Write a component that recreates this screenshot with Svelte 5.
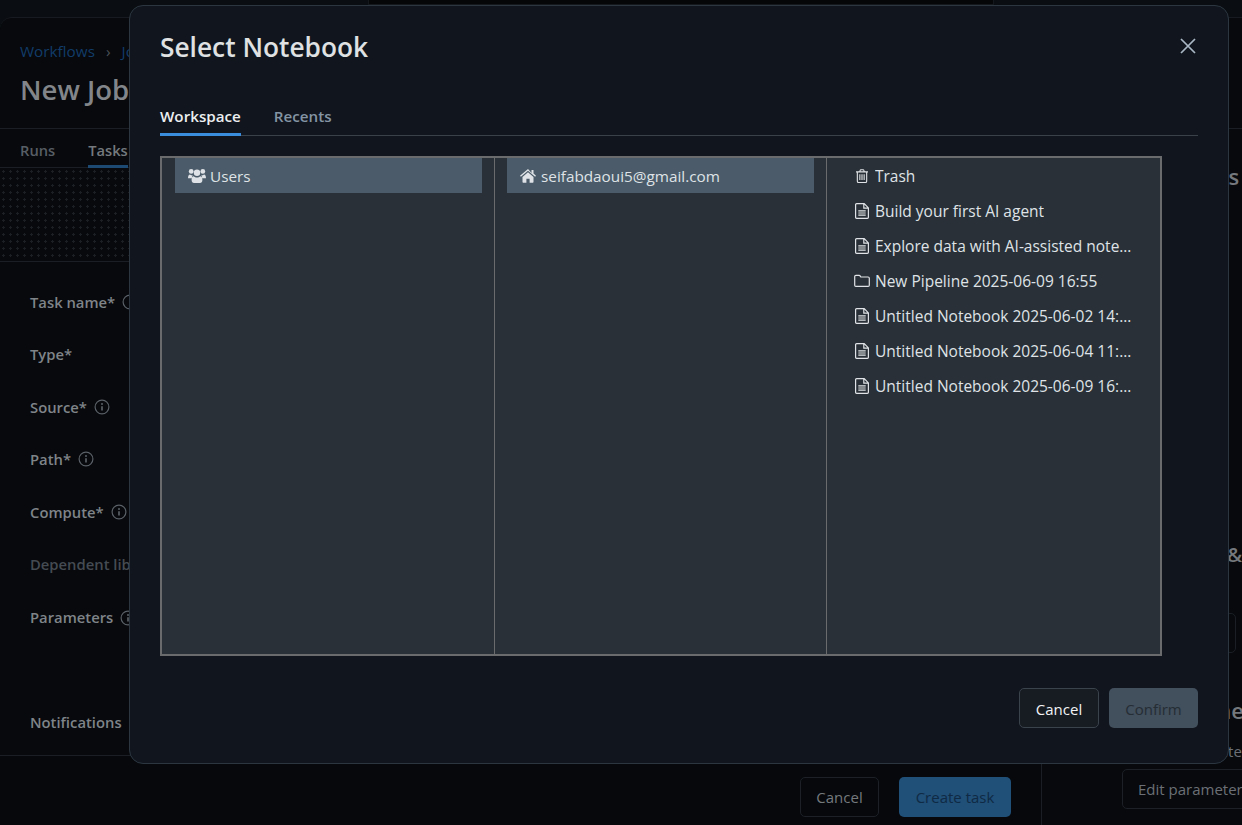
<script lang="ts">
	const fields = [
		{ label: 'Task name*', info: true },
		{ label: 'Type*', info: false },
		{ label: 'Source*', info: true },
		{ label: 'Path*', info: true },
		{ label: 'Compute*', info: true },
		{ label: 'Dependent libraries', info: false, muted: true },
		{ label: 'Parameters', info: true, tall: true },
		{ label: 'Notifications', info: false }
	];

	const files = [
		{ icon: 'trash', name: 'Trash' },
		{ icon: 'file', name: 'Build your first AI agent' },
		{ icon: 'file', name: 'Explore data with AI-assisted notebooks' },
		{ icon: 'folder', name: 'New Pipeline 2025-06-09 16:55' },
		{ icon: 'file', name: 'Untitled Notebook 2025-06-02 14:32:18' },
		{ icon: 'file', name: 'Untitled Notebook 2025-06-04 11:07:45' },
		{ icon: 'file', name: 'Untitled Notebook 2025-06-09 16:21:03' }
	];
</script>

{#snippet icon(name: string)}
	{#if name === 'users'}
		<svg class="ico users" viewBox="0 0 18 16" fill="currentColor">
			<circle cx="3.2" cy="3.4" r="2.4" />
			<circle cx="14.8" cy="3.4" r="2.4" />
			<circle cx="9" cy="4.8" r="3.2" />
			<path d="M0 10.2c0-2.4.8-3.8 2-3.8.8.7 1.7 1 2.7.9-.5.8-.8 1.7-.9 2.9H0zM18 10.2c0-2.4-.8-3.8-2-3.800-.8.700-1.700 1-2.700.900.500.800.800 1.700.900 2.900H18z" />
			<path d="M5.600 8.300c1 .900 2.100 1.300 3.400 1.300s2.400-.400 3.400-1.300c1.300 0 2 1.500 2 3.800 0 1.800-1 2.900-2.400 2.900H6c-1.400 0-2.400-1.100-2.400-2.900 0-2.300.700-3.800 2-3.800z" />
		</svg>
	{:else if name === 'home'}
		<svg class="ico home" viewBox="0 0 16 14" fill="currentColor">
			<path d="M8 3.300 2.500 7.900v5.200c0 .4.300.7.700.7h3.200V9.700h3.200v4.100h3.200c.4 0 .7-.3.700-.7V7.900L8 3.300z" />
			<path d="M8 0 0 6.700l.9 1L8 1.800l7.100 5.900.9-1-2.500-2.100V1h-2v2.900L8 0z" />
		</svg>
	{:else if name === 'trash'}
		<svg class="ico trash" viewBox="0 0 14 15" fill="none" stroke="currentColor" stroke-width="1.200">
			<path d="M.6 3.100h12.800M2 3.100v9.900c0 .8.500 1.400 1.200 1.400h7.600c.7 0 1.200-.6 1.200-1.400V3.100M4.400 3.100l.7-1.800c.1-.3.300-.5.600-.5h2.600c.3 0 .5.200.6.500l.7 1.800M4.700 5.600v6.300M7 5.600v6.300M9.300 5.600v6.300" />
		</svg>
	{:else if name === 'folder'}
		<svg class="ico folder" viewBox="0 0 16 14" fill="none" stroke="currentColor" stroke-width="1.200">
			<path d="M.7 2.500c0-.7.500-1.200 1.200-1.200h3.200c.6 0 .9.300 1.200.8l.5.9h7.300c.7 0 1.200.5 1.200 1.200v7c0 .7-.5 1.200-1.200 1.200H1.900c-.7 0-1.200-.5-1.200-1.200v-8.700z" />
		</svg>
	{:else}
		<svg class="ico" viewBox="0 0 14 16" fill="none" stroke="currentColor" stroke-width="1.200">
			<path d="M1.600.7h7.600l4.200 4.200v9.400c0 .6-.4 1-1 1H1.600c-.6 0-1-.4-1-1V1.700c0-.6.400-1 1-1zM8.800.9v4.300h4.500M3.300 7.800h7.400M3.300 10h7.400M3.300 12.200h7.400" />
		</svg>
	{/if}
{/snippet}

{#snippet info()}
	<svg class="info" viewBox="0 0 16 16" fill="none" stroke="currentColor" stroke-width="1.200">
		<circle cx="8" cy="8" r="6.900" />
		<path d="M8 7.200v4.400" stroke-width="1.700" />
		<circle cx="8" cy="4.900" r="1" fill="currentColor" stroke="none" />
	</svg>
{/snippet}

<div class="page">
	<div class="topbar"><div class="topbar__tab"></div></div>

	<div class="job">
		<header class="job__head">
			<nav class="crumbs"><span>Workflows</span><i>›</i><span>Jobs</span></nav>
			<h1>New Job</h1>
		</header>

		<div class="job__body">
			<section class="left">
				<div class="tabs"><span>Runs</span><span class="tabs__on">Tasks</span></div>
				<div class="canvas"></div>
				<div class="form">
					{#each fields as f}
						<div class="field" class:field--tall={f.tall} class:field--muted={f.muted}>
							<span>{f.label}</span>
							{#if f.info}{@render info()}{/if}
						</div>
					{/each}
				</div>
				<footer class="left__foot">
					<button class="ghost">Cancel</button>
					<button class="create">Create task</button>
				</footer>
			</section>

			<aside class="right">
				<h2 class="details">Job details</h2>
				<h2 class="sched">Schedules &amp; Triggers</h2>
				<div class="box"></div>
				<h2 class="params">Job parameters</h2>
				<p>Set job parameters</p>
				<button class="edit">Edit parameters</button>
			</aside>
		</div>
	</div>

	<div class="modal">
		<div class="modal__head">
			<h3>Select Notebook</h3>
			<svg class="close" viewBox="0 0 16 16" fill="none" stroke="currentColor" stroke-width="1.700">
				<path d="M1 1l14 14M15 1 1 15" />
			</svg>
		</div>

		<div class="mtabs">
			<span class="mtabs__on">Workspace</span>
			<span>Recents</span>
		</div>

		<div class="finder">
			<ul class="col">
				<li class="row row--on">{@render icon('users')}<span>Users</span></li>
			</ul>
			<ul class="col">
				<li class="row row--on">{@render icon('home')}<span>seifabdaoui5@gmail.com</span></li>
			</ul>
			<ul class="col col--files">
				{#each files as f}
					<li class="row">{@render icon(f.icon)}<span class="row__name">{f.name}</span></li>
				{/each}
			</ul>
		</div>

		<div class="modal__foot">
			<button class="cancel">Cancel</button>
			<button class="confirm">Confirm</button>
		</div>
	</div>
</div>

<style>
	:global(body) {
		margin: 0;
		background: #07090c;
		font-family: 'Open Sans', 'Noto Sans', sans-serif;
	}
	.page {
		position: relative;
		width: 1242px;
		height: 825px;
		overflow: hidden;
		display: flex;
		flex-direction: column;
		background: #0a0d11;
	}
	.topbar {
		height: 17px;
		flex: none;
		display: flex;
		justify-content: center;
	}
	.topbar__tab {
		width: 624px;
		height: 4px;
		margin-left: 120px;
		background: #050608;
		border: 1px solid #14181d;
		border-top: none;
	}
	.job {
		flex: 1;
		display: flex;
		flex-direction: column;
		min-height: 0;
		background: #07090c;
		border-top: 1px solid #171b21;
		border-top-left-radius: 12px;
	}
	.job__head {
		height: 111px;
		flex: none;
		padding: 23px 0 0 20px;
		box-sizing: border-box;
		border-bottom: 1px solid #1b1f25;
	}
	.crumbs {
		display: flex;
		align-items: center;
		gap: 11px;
		font-size: 15.300px;
		line-height: 20px;
		color: #123c69;
	}
	.crumbs i {
		font-style: normal;
		color: #4b5158;
	}
	h1 {
		margin: 11px 0 0;
		font-size: 27.500px;
		line-height: 36px;
		font-weight: 600;
		color: #82868a;
	}
	.job__body {
		flex: 1;
		display: flex;
		min-height: 0;
	}
	.left {
		width: 1041px;
		flex: none;
		display: flex;
		flex-direction: column;
		border-right: 1px solid #1b1f25;
	}
	.tabs {
		height: 39px;
		flex: none;
		display: flex;
		gap: 33px;
		padding-left: 20px;
		box-sizing: border-box;
		border-bottom: 1px solid #1b1f25;
		font-size: 14.700px;
		font-weight: 600;
		line-height: 42px;
		color: #585e65;
	}
	.tabs__on {
		color: #74797e;
		height: 39px;
		box-sizing: border-box;
		border-bottom: 3px solid #1c4a73;
	}
	.canvas {
		height: 93px;
		flex: none;
		border-bottom: 1px solid #1b1f25;
		background-color: #07090c;
		background-image: radial-gradient(#1c2025 1px, transparent 1.200px);
		background-size: 7px 7px;
	}
	.form {
		flex: 1;
		padding: 13.500px 0 0 30px;
	}
	.field {
		height: 52.500px;
		display: flex;
		align-items: center;
		gap: 7px;
		font-size: 14.800px;
		font-weight: 600;
		color: #7f8489;
		white-space: nowrap;
	}
	.field--tall {
		height: 105px;
		align-items: flex-start;
		padding-top: 16.500px;
		box-sizing: border-box;
	}
	.field--tall .info {
		margin-top: 3px;
	}
	.field--muted {
		color: #454b52;
	}
	.info {
		width: 16px;
		height: 16px;
		color: #5a6067;
	}
	.left__foot {
		height: 70px;
		flex: none;
		display: flex;
		justify-content: flex-end;
		gap: 20px;
		padding: 21px 30px 0 0;
		box-sizing: border-box;
		border-top: 1px solid #1b1f25;
		background: #06080b;
	}
	button {
		font: inherit;
		font-size: 15px;
		border-radius: 5px;
		box-sizing: border-box;
		padding: 0;
	}
	.ghost {
		width: 79px;
		height: 40px;
		background: transparent;
		border: 1px solid #1d2127;
		color: #75797e;
	}
	.create {
		width: 112px;
		height: 40px;
		border: none;
		background: #204f78;
		color: #0f2a44;
	}
	.right {
		flex: 1;
		min-width: 0;
		padding-left: 80px;
		overflow: hidden;
		white-space: nowrap;
		color: #6c7076;
	}
	.right h2 {
		margin: 0;
		font-size: 22px;
		line-height: 28px;
		font-weight: 600;
		color: #74787c;
	}
	.right .details {
		padding: 33px 0 0 7px;
	}
	.right .sched {
		padding-top: 350px;
		font-size: 20.500px;
	}
	.box {
		width: 114px;
		height: 40px;
		margin-top: 45px;
		box-sizing: border-box;
		border: 1px solid #1b1f25;
		border-radius: 5px;
	}
	.right .params {
		padding-top: 43px;
	}
	.right p {
		margin: 17px 0 0;
		font-size: 15px;
		line-height: 20px;
	}
	.edit {
		display: block;
		width: 140px;
		height: 40px;
		margin-top: 8px;
		text-align: left;
		padding-left: 15px;
		background: transparent;
		border: 1px solid #1d2127;
		color: #6c7076;
	}
	.modal {
		position: absolute;
		left: 129px;
		top: 5px;
		width: 1100px;
		height: 759px;
		box-sizing: border-box;
		padding: 0 30px;
		display: flex;
		flex-direction: column;
		background: #11161e;
		border: 1px solid #2c3641;
		border-radius: 14px;
	}
	.modal__head {
		height: 84px;
		flex: none;
		display: flex;
		justify-content: space-between;
		align-items: flex-start;
		padding-top: 23px;
		box-sizing: border-box;
	}
	h3 {
		margin: 0;
		font-size: 26.300px;
		line-height: 36px;
		font-weight: 600;
		color: #dfe1e3;
	}
	.close {
		width: 16px;
		height: 16px;
		margin: 9px 2px 0 0;
		color: #a9b7c5;
	}
	.mtabs {
		height: 46px;
		flex: none;
		display: flex;
		gap: 33px;
		box-sizing: border-box;
		border-bottom: 1px solid #3a4149;
		font-size: 15.200px;
		font-weight: 600;
		line-height: 52px;
		color: #8494a4;
	}
	.mtabs__on {
		height: 46px;
		box-sizing: border-box;
		color: #eceef0;
		border-bottom: 3px solid #3a8cdc;
		margin-bottom: -1px;
	}
	.finder {
		width: 1002px;
		height: 500px;
		flex: none;
		margin-top: 20px;
		box-sizing: border-box;
		display: flex;
		background: #2a3037;
		border: 2px solid #696b6d;
		font-size: 15.300px;
		color: #dfe3e7;
	}
	.col {
		list-style: none;
		margin: 0;
		width: 333px;
		flex: none;
		padding: 0 12px 0 13px;
		box-sizing: border-box;
		border-right: 1px solid #696b6d;
	}
	.col:nth-child(2) {
		width: 332px;
		padding-left: 12px;
	}
	.col--files {
		border-right: none;
		padding-left: 15px;
		padding-right: 25px;
		font-size: 15.500px;
	}
	.row {
		height: 35px;
		display: flex;
		align-items: center;
		gap: 6px;
		padding-left: 13px;
		white-space: nowrap;
	}
	.row--on {
		background: #4b5b69;
	}
	.row__name {
		min-width: 0;
		overflow: hidden;
		text-overflow: ellipsis;
	}
	.ico {
		width: 14px;
		height: 16px;
		flex: none;
	}
	.ico.users {
		width: 18px;
		height: 16px;
		margin-right: -2px;
	}
	.ico.home {
		width: 16px;
		height: 14px;
		margin-right: -1px;
	}
	.ico.trash {
		height: 14px;
	}
	.ico.folder {
		width: 16px;
		height: 14px;
		margin: 0 -1px 0 -1px;
	}
	.modal__foot {
		flex: 1;
		display: flex;
		justify-content: flex-end;
		gap: 10px;
		padding-top: 32px;
	}
	.modal__foot button {
		padding-top: 1px;
	}
	.cancel {
		width: 80px;
		height: 40px;
		background: #171b22;
		border: 1px solid #3a424b;
		color: #f1f3f5;
	}
	.confirm {
		width: 89px;
		height: 40px;
		border: none;
		background: #424f5c;
		color: #252d35;
	}
</style>
